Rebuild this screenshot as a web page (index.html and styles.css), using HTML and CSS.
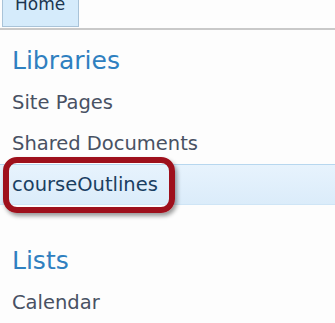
FILE: index.html
```html
<!DOCTYPE html>
<html lang="en">
<head>
<meta charset="UTF-8">
<meta name="viewport" content="width=device-width, initial-scale=1.0">
<title>Quick Launch</title>
<link rel="stylesheet" href="styles.css">
</head>
<body>
  <div class="top-bar">
    <div class="tab">Home</div>
  </div>

  <div class="quick-launch">
    <div class="section">
      <h2 class="section-title">Libraries</h2>
      <ul class="nav-list">
        <li class="nav-item">Site Pages</li>
        <li class="nav-item">Shared Documents</li>
        <li class="nav-item selected">courseOutlines<span class="callout"></span></li>
      </ul>
    </div>

    <div class="section lists">
      <h2 class="section-title">Lists</h2>
      <ul class="nav-list">
        <li class="nav-item">Calendar</li>
      </ul>
    </div>
  </div>
</body>
</html>
```

FILE: styles.css
```css
body {
  font-family: "DejaVu Sans", Verdana, sans-serif;
  margin: 0;
  padding: 0;
  background-color: #fdfdfd;
  color: #485163;
  overflow: hidden;
}

.top-bar {
  height: 28px;
  padding-left: 2px;
  border-bottom: 2px solid #c9c9c9;
  display: flex;
}

.tab {
  height: 27px;
  padding: 0 13px 13px 12px;
  box-sizing: border-box;
  display: flex;
  align-items: flex-end;
  font-size: 17px;
  line-height: 17px;
  color: #1b3550;
  background: #d5ebfb;
  border: 1px solid #a9c3d8;
  border-top: none;
}

.quick-launch {
  padding-top: 14px;
}

.section-title {
  margin: 0 0 4px 12px;
  font-size: 25px;
  font-weight: normal;
  line-height: 34px;
  color: #2f80c0;
}

.nav-list {
  list-style: none;
  margin: 0;
  padding: 0;
}

.nav-item {
  height: 41px;
  line-height: 41px;
  padding-left: 12px;
  font-size: 19.5px;
  box-sizing: border-box;
}

.selected {
  position: relative;
  line-height: 39px;
  color: #1a3f62;
  background: linear-gradient(#e7f3fd, #dbecfa);
  border-top: 1px solid #b7d7ef;
  border-bottom: 1px solid #cfe5f6;
}

/* red annotation box drawn over the selected link */
.callout {
  position: absolute;
  top: -8px;
  left: 3px;
  width: 172px;
  height: 56px;
  box-sizing: border-box;
  border: 6px solid #9e101c;
  border-radius: 14px;
  box-shadow: 2px 3px 4px rgba(0, 0, 0, 0.4);
}

.lists {
  margin-top: 39px;
}
```
